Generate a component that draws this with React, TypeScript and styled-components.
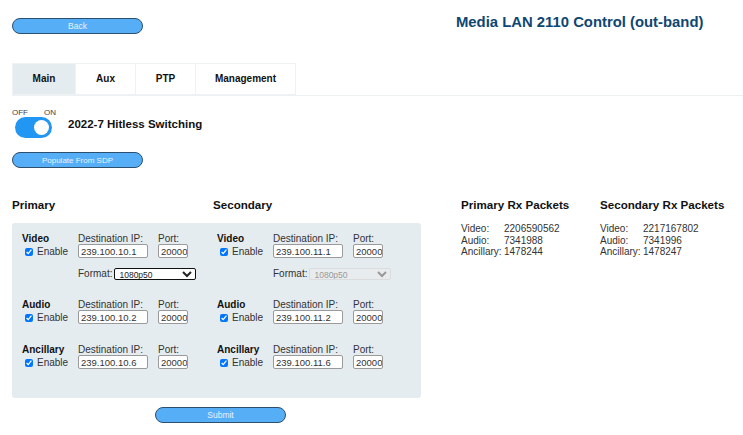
import styled, { createGlobalStyle } from "styled-components";

const Global = createGlobalStyle`
  html, body {
    margin: 0;
    background: #fff;
    font-family: "Liberation Sans", Arial, sans-serif;
    color: #333;
  }
`;

const streams = ["Video", "Audio", "Ancillary"];

const Page = styled.div`
  width: 743px;
  height: 435px;
  overflow: hidden;
  padding: 18px 0 0 12px;
  box-sizing: border-box;
`;

const Header = styled.header`
  display: flex;
  height: 45px;
`;

const PillButton = styled.button<{ $small?: boolean }>`
  display: block;
  width: 131px;
  height: 16px;
  padding: 0;
  border: 1px solid #2c4f6e;
  border-radius: 8px;
  background: #56aef6;
  color: #e6f3fd;
  font-family: inherit;
  font-size: ${(p) => (p.$small ? 8 : 8.5)}px;
`;

const Title = styled.h1`
  margin: -6px 0 0 313px;
  color: #0f4672;
  font-size: 14.85px;
  line-height: 20px;
  font-weight: 700;
  white-space: nowrap;
`;

const TabBar = styled.nav`
  display: flex;
  height: 32px;
  border-bottom: 1px solid #eef1f3;
`;

const Tab = styled.div<{ $active?: boolean; $width: number }>`
  width: ${(p) => p.$width}px;
  box-sizing: border-box;
  display: flex;
  align-items: center;
  justify-content: center;
  padding-bottom: 1px;
  border: 1px solid #eef2f5;
  border-left-width: ${(p) => (p.$active ? 1 : 0)}px;
  background: ${(p) => (p.$active ? "#e5ecf0" : "#fff")};
  color: #111;
  font-size: 10px;
  font-weight: 700;
`;

const ToggleRow = styled.div`
  display: flex;
  margin-top: 12px;
  height: 29px;
`;

const ToggleWrap = styled.div`
  width: 44px;
  margin-right: 12px;
`;

const ToggleLabels = styled.div`
  display: flex;
  justify-content: space-between;
  color: #444;
  font-size: 8px;
  line-height: 9px;
`;

const ToggleTrack = styled.div`
  width: 37px;
  height: 21px;
  margin: 0 0 0 3px;
  box-sizing: border-box;
  padding: 3px 3px 3px 19px;
  border-radius: 11px;
  background: #2196f3;
`;

const ToggleKnob = styled.div`
  width: 15px;
  height: 15px;
  border-radius: 50%;
  background: #fff;
`;

const ToggleTitle = styled.h2`
  margin: 8px 0 0;
  color: #111;
  font-size: 11.5px;
  line-height: 16px;
  font-weight: 700;
`;

const PopulateSlot = styled.div`
  margin-top: 15px;
`;

const Main = styled.div`
  display: flex;
  margin-top: 29px;
`;

const FormColumn = styled.div`
  width: 409px;
`;

const Headings = styled.div`
  display: flex;
  height: 26px;
`;

const Heading = styled.h3<{ $width?: number }>`
  margin: 0;
  width: ${(p) => (p.$width ? `${p.$width}px` : "auto")};
  color: #111;
  font-size: 11.6px;
  line-height: 16px;
  font-weight: 700;
  white-space: nowrap;
`;

const Panel = styled.section`
  display: grid;
  grid-template-columns: 195px 195px;
  align-content: start;
  height: 175px;
  padding: 10px 0 0 10px;
  box-sizing: border-box;
  border-radius: 3px;
  background: #e5ecf0;
`;

const Group = styled.div<{ $video?: boolean }>`
  display: grid;
  grid-template-columns: 56px 80px 1fr;
  grid-auto-rows: min-content;
  height: ${(p) => (p.$video ? 66 : 45)}px;
  font-size: 10px;
  line-height: 12px;
  color: #333;
`;

const StreamName = styled.div`
  color: #111;
  font-weight: 700;
`;

const EnableLabel = styled.label`
  display: flex;
  align-items: center;
  height: 14px;
  margin-left: 3px;
`;

const Check = styled.input`
  width: 8px;
  height: 8px;
  margin: 0 4px 0 0;
  accent-color: #0075ff;
`;

const Field = styled.input<{ $width: number }>`
  display: block;
  width: ${(p) => p.$width}px;
  height: 14px;
  margin-top: -1px;
  box-sizing: border-box;
  padding: 0 0 0 2px;
  border: 1px solid #9a9a9a;
  border-radius: 2px;
  background: #fff;
  color: #333;
  font-family: inherit;
  font-size: 9.5px;
  outline: none;
`;

const FormatRow = styled.div`
  grid-column: 2 / 4;
  display: flex;
  align-items: center;
  gap: 2px;
  margin-top: 9px;
  height: 12px;
`;

const FormatSelect = styled.select<{ $focused?: boolean }>`
  width: 82px;
  height: 12px;
  box-sizing: border-box;
  padding: 0;
  border: 1px solid ${(p) => (p.$focused ? "#111" : "#dcdcdc")};
  border-radius: 2px;
  background: ${(p) => (p.$focused ? "#fff" : "#e9ecee")};
  color: ${(p) => (p.$focused ? "#222" : "#999")};
  font-family: inherit;
  font-size: 8.5px;
  opacity: 1;
`;

const SubmitSlot = styled.div`
  display: flex;
  justify-content: center;
  margin-top: 9px;
  width: 417px;
`;

const Stats = styled.aside`
  display: flex;
  margin-left: 40px;
`;

const StatBlock = styled.div<{ $width: number }>`
  width: ${(p) => p.$width}px;
`;

const StatList = styled.dl`
  display: grid;
  grid-template-columns: 43px auto;
  grid-auto-rows: 11.6px;
  margin: 10px 0 0;
  font-size: 10px;
  line-height: 11.6px;
  color: #333;
  dt, dd {
    margin: 0;
  }
`;

const ports = (secondary: boolean) => (secondary ? "239.100.11." : "239.100.10.");
const suffix: Record<string, number> = { Video: 1, Audio: 2, Ancillary: 6 };

const Side = ({ secondary }: { secondary: boolean }) => (
  <div>
    {streams.map((name) => (
      <Group key={name} $video={name === "Video"}>
        <StreamName>{name}</StreamName>
        <div>Destination IP:</div>
        <div>Port:</div>
        <EnableLabel>
          <Check type="checkbox" defaultChecked />
          Enable
        </EnableLabel>
        <Field $width={70} defaultValue={ports(secondary) + suffix[name]} />
        <Field $width={30} defaultValue="20000" />
        {name === "Video" && (
          <FormatRow>
            Format:
            <FormatSelect $focused={!secondary} disabled={secondary} defaultValue="1080p50">
              <option>1080p50</option>
            </FormatSelect>
          </FormatRow>
        )}
      </Group>
    ))}
  </div>
);

const Counters = ({ title, width, values }: { title: string; width: number; values: string[] }) => (
  <StatBlock $width={width}>
    <Heading>{title}</Heading>
    <StatList>
      <dt>Video:</dt>
      <dd>{values[0]}</dd>
      <dt>Audio:</dt>
      <dd>{values[1]}</dd>
      <dt>Ancillary:</dt>
      <dd>{values[2]}</dd>
    </StatList>
  </StatBlock>
);

export default function App() {
  return (
    <Page>
      <Global />
      <Header>
        <PillButton>Back</PillButton>
        <Title>Media LAN 2110 Control (out-band)</Title>
      </Header>
      <TabBar>
        <Tab $active $width={64}>Main</Tab>
        <Tab $width={60}>Aux</Tab>
        <Tab $width={60}>PTP</Tab>
        <Tab $width={100}>Management</Tab>
      </TabBar>
      <ToggleRow>
        <ToggleWrap>
          <ToggleLabels>
            <span>OFF</span>
            <span>ON</span>
          </ToggleLabels>
          <ToggleTrack>
            <ToggleKnob />
          </ToggleTrack>
        </ToggleWrap>
        <ToggleTitle>2022-7 Hitless Switching</ToggleTitle>
      </ToggleRow>
      <PopulateSlot>
        <PillButton $small>Populate From SDP</PillButton>
      </PopulateSlot>
      <Main>
        <FormColumn>
          <Headings>
            <Heading $width={201}>Primary</Heading>
            <Heading>Secondary</Heading>
          </Headings>
          <Panel>
            <Side secondary={false} />
            <Side secondary />
          </Panel>
          <SubmitSlot>
            <PillButton>Submit</PillButton>
          </SubmitSlot>
        </FormColumn>
        <Stats>
          <Counters title="Primary Rx Packets" width={139} values={["2206590562", "7341988", "1478244"]} />
          <Counters title="Secondary Rx Packets" width={130} values={["2217167802", "7341996", "1478247"]} />
        </Stats>
      </Main>
    </Page>
  );
}
